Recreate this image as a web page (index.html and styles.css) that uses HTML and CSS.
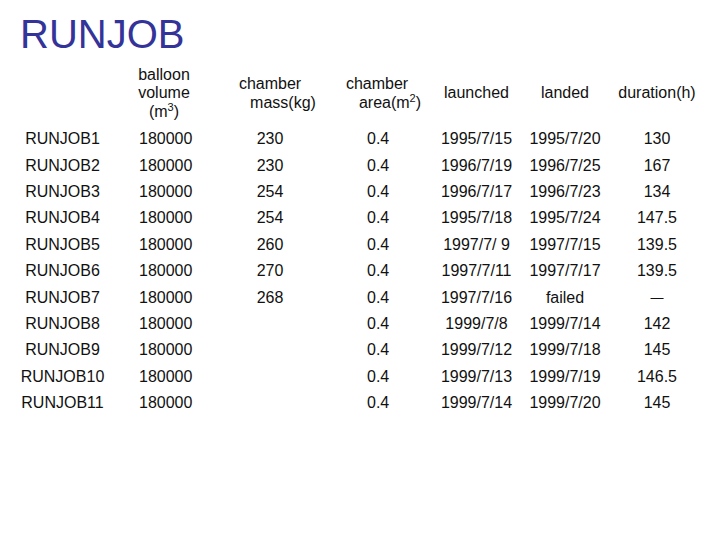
FILE: index.html
```html
<!DOCTYPE html>
<html>
<head>
<meta charset="utf-8">
<link rel="stylesheet" href="styles.css">
</head>
<body>
<div class="slide">
  <h1 class="title">RUNJOB</h1>
  <table class="runs">
    <colgroup>
      <col class="c1"><col class="c2"><col class="c3"><col class="c4"><col class="c5"><col class="c6"><col class="c7">
    </colgroup>
    <thead>
      <tr>
        <th></th>
        <th><span class="ln">balloon</span><span class="ln">volume</span><span class="ln">(m<sup>3</sup>)</span></th>
        <th><span class="ln">chamber</span><span class="ln shift">mass(kg)</span></th>
        <th><span class="ln">chamber</span><span class="ln shift">area(m<sup>2</sup>)</span></th>
        <th>launched</th>
        <th>landed</th>
        <th>duration(h)</th>
      </tr>
    </thead>
    <tbody>
      <tr><td>RUNJOB1</td><td class="vol">180000</td><td>230</td><td class="area">0.4</td><td>1995/7/15</td><td>1995/7/20</td><td>130</td></tr>
      <tr><td>RUNJOB2</td><td class="vol">180000</td><td>230</td><td class="area">0.4</td><td>1996/7/19</td><td>1996/7/25</td><td>167</td></tr>
      <tr><td>RUNJOB3</td><td class="vol">180000</td><td>254</td><td class="area">0.4</td><td>1996/7/17</td><td>1996/7/23</td><td>134</td></tr>
      <tr><td>RUNJOB4</td><td class="vol">180000</td><td>254</td><td class="area">0.4</td><td>1995/7/18</td><td>1995/7/24</td><td>147.5</td></tr>
      <tr><td>RUNJOB5</td><td class="vol">180000</td><td>260</td><td class="area">0.4</td><td>1997/7/ 9</td><td>1997/7/15</td><td>139.5</td></tr>
      <tr><td>RUNJOB6</td><td class="vol">180000</td><td>270</td><td class="area">0.4</td><td>1997/7/11</td><td>1997/7/17</td><td>139.5</td></tr>
      <tr><td>RUNJOB7</td><td class="vol">180000</td><td>268</td><td class="area">0.4</td><td>1997/7/16</td><td>failed</td><td class="dash">—</td></tr>
      <tr><td>RUNJOB8</td><td class="vol">180000</td><td></td><td class="area">0.4</td><td>1999/7/8</td><td>1999/7/14</td><td>142</td></tr>
      <tr><td>RUNJOB9</td><td class="vol">180000</td><td></td><td class="area">0.4</td><td>1999/7/12</td><td>1999/7/18</td><td>145</td></tr>
      <tr><td>RUNJOB10</td><td class="vol">180000</td><td></td><td class="area">0.4</td><td>1999/7/13</td><td>1999/7/19</td><td>146.5</td></tr>
      <tr><td>RUNJOB11</td><td class="vol">180000</td><td></td><td class="area">0.4</td><td>1999/7/14</td><td>1999/7/20</td><td>145</td></tr>
    </tbody>
  </table>
</div>
</body>
</html>
```
FILE: styles.css
```css
html, body {
  margin: 0;
  padding: 0;
  background: #ffffff;
}

.slide {
  width: 720px;
  height: 540px;
  font-family: "Liberation Sans", Arial, sans-serif;
  color: #111111;
  padding: 0 0 0 8px;
  box-sizing: border-box;
}

.title {
  margin: 14px 0 0 12px;
  font-size: 40px;
  line-height: 40px;
  font-weight: normal;
  color: #333399;
}

.runs {
  margin-top: 7px;
  border-collapse: collapse;
  table-layout: fixed;
  width: 704px;
  font-size: 16px;
}

.c1 { width: 109px; }
.c2 { width: 94px; }
.c3 { width: 118px; }
.c4 { width: 96px; }
.c5 { width: 103px; }
.c6 { width: 74px; }
.c7 { width: 110px; }

.runs th {
  height: 65px;
  padding: 0;
  font-weight: normal;
  text-align: center;
  vertical-align: middle;
  line-height: 18.3px;
}

.runs th .ln {
  display: block;
}

.runs th .shift {
  padding-left: 26px;
}

.runs sup {
  font-size: 11px;
  line-height: 0;
  vertical-align: 6px;
}

.runs td {
  height: 26.4px;
  padding: 0;
  text-align: center;
  vertical-align: middle;
  white-space: pre;
}

.runs td.vol {
  text-align: left;
  padding-left: 22px;
}

.runs td.area {
  text-align: left;
  padding-left: 38px;
}

.runs td.dash {
  font-size: 13px;
}
```
